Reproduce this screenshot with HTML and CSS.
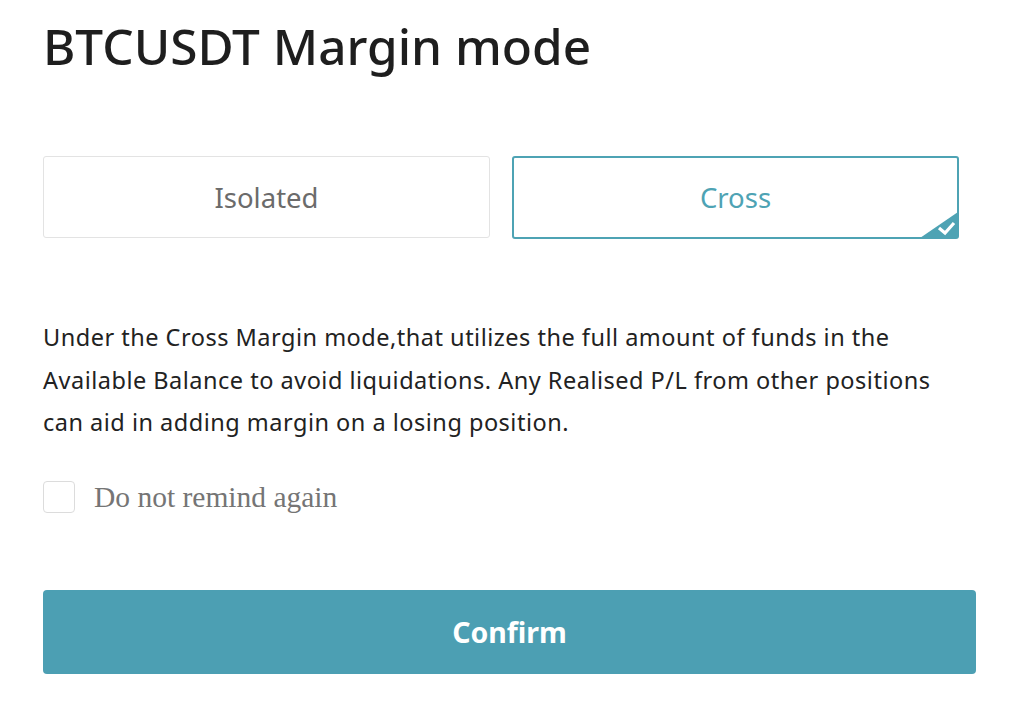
FILE: index.html
```html
<!DOCTYPE html>
<html>
<head>
<meta charset="utf-8">
<link rel="stylesheet" href="styles.css">
</head>
<body>
<div class="dialog">
  <h1 class="title">BTCUSDT Margin mode</h1>
  <div class="options">
    <div class="option">Isolated</div>
    <div class="option active">Cross
      <svg class="corner" width="38" height="26" viewBox="0 0 38 26">
        <path d="M0 26 L38 0 L38 22 Q38 26 34 26 Z" fill="#4ea3b4"/>
        <path d="M19 16 L25 21 L34 11" fill="none" stroke="#fff" stroke-width="3.2"/>
      </svg>
    </div>
  </div>
  <p class="desc">Under the Cross Margin mode,that utilizes the full amount of funds in the Available Balance to avoid liquidations. Any Realised P/L from other positions can aid in adding margin on a losing position.</p>
  <label class="remind"><span class="box"></span><span class="remind-text">Do not remind again</span></label>
  <button class="confirm">Confirm</button>
</div>
</body>
</html>
```
FILE: styles.css
```css
body {
  margin: 0;
  background: #fff;
  font-family: "Noto Sans", sans-serif;
}
.dialog {
  padding: 12px 48px 0 43px;
}
.title {
  margin: 0;
  font-size: 49.5px;
  font-weight: 500;
  color: #1e1e1e;
  line-height: 68px;
  letter-spacing: 0;
}
.options {
  display: grid;
  grid-template-columns: 447px 447px;
  column-gap: 22px;
  margin-top: 76px;
}
.option {
  position: relative;
  height: 80px;
  border: 1.5px solid #e3e3e3;
  border-radius: 3px;
  display: flex;
  align-items: center;
  justify-content: center;
  font-size: 27.5px;
  color: #6b6b6b;
}
.option.active {
  border: 2px solid #4ea3b4;
  height: 79px;
  color: #4ea3b4;
}
.corner {
  position: absolute;
  right: -1px;
  bottom: -1px;
}
.desc {
  margin: 77px 0 0 0;
  font-size: 23.5px;
  letter-spacing: 0.5px;
  line-height: 42.5px;
  color: #222;
  max-width: 915px;
}
.remind {
  display: flex;
  align-items: center;
  margin-top: 37px;
}
.box {
  width: 32px;
  height: 32px;
  border: 1.5px solid #dcdcdc;
  border-radius: 4px;
  box-sizing: border-box;
}
.remind-text {
  margin-left: 19px;
  font-family: "Liberation Serif", serif;
  font-size: 29.5px;
  color: #757575;
}
.confirm {
  display: block;
  margin-top: 76px;
  width: 933px;
  height: 84px;
  border: none;
  border-radius: 4px;
  background: #4c9fb3;
  color: #fff;
  font-family: "Noto Sans", sans-serif;
  font-weight: 700;
  font-size: 28.5px;
}
```
